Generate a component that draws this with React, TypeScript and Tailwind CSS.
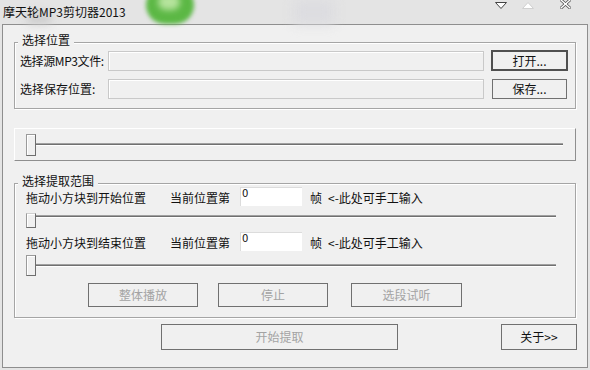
import type { ReactNode } from 'react'

const font = "font-['Noto_Sans_CJK_SC','Noto_Sans',sans-serif]"

function GroupBox({ title, className, children }: { title: string; className: string; children: ReactNode }) {
  return (
    <div className={`relative mx-[11px] border border-[#a5a5a5] shadow-[inset_1px_1px_0_#fff,1px_1px_0_#fff] ${className}`}>
      <span className="absolute left-[3px] top-[-10px] bg-[#f0f0f0] px-[4px] text-[12px] leading-[13px] text-[#111]">{title}</span>
      {children}
    </div>
  )
}

function Thumb({ className }: { className: string }) {
  return (
    <div className={`w-[10px] shrink-0 border border-[#9a9a9a] border-b-[#6e6e6e] border-r-[#6e6e6e] bg-[#f0f0f0] shadow-[inset_1px_1px_0_#fff] ${className}`} />
  )
}

function Groove({ className }: { className: string }) {
  return <div className={`h-[3px] border-t border-t-[#a0a0a0] border-b border-b-white bg-[#707070] ${className}`} />
}

function Button({ label, className, disabled, primary }: { label: string; className: string; disabled?: boolean; primary?: boolean }) {
  return (
    <button
      className={`flex shrink-0 items-center justify-center bg-[#f0f0f0] text-[12px] leading-none ${primary ? 'border-2 border-[#505050]' : 'border border-[#707070]'} ${disabled ? 'text-[#a3a3a3]' : 'text-[#111]'} ${className}`}
    >
      {label}
    </button>
  )
}

function FrameRow({ label }: { label: string }) {
  return (
    <div className="flex h-[19px] items-center pl-[11px] text-[12px] leading-[12px] text-[#111]">
      <span className="w-[144px] shrink-0 pt-[2px]">{label}</span>
      <span className="w-[70px] shrink-0 pt-[2px]">当前位置第</span>
      <div className="h-[19px] w-[62px] shrink-0 border-l border-t border-[#dcdcdc] bg-white pl-[1px] pt-[1px] font-['DejaVu_Sans',sans-serif] text-[10px] leading-[10px]">0</div>
      <span className="ml-[8px] pt-[2px]">帧</span>
      <span className="ml-[6px] pt-[2px]">&lt;-此处可手工输入</span>
    </div>
  )
}

export default function App() {
  return (
    <div className={`flex h-[370px] w-[590px] flex-col overflow-hidden bg-[#e4e4e4] ${font}`}>
      {/* title bar */}
      <div className="relative flex h-[24px] shrink-0 items-center">
        <div className="absolute left-[146px] top-[-14px] h-[38px] w-[48px] rounded-full bg-[#5cb845] blur-[2px]" />
        <div className="absolute left-[158px] top-[-6px] h-[16px] w-[22px] rounded-full bg-[#b5e39c] blur-[3px]" />
        <div className="absolute left-[26px] top-[12px] h-[12px] w-[26px] rounded-full bg-[#cdcdcd] blur-[4px]" />
        <div className="absolute left-[294px] top-0 h-[24px] w-[40px] bg-[#dcdce0] blur-[6px]" />
        <span className="relative ml-[3px] text-[12px] leading-none text-[#111]">摩天轮MP3剪切器2013</span>
        <div className="relative ml-auto mr-[19px] flex items-start self-start pt-[2px]">
          <svg width="12" height="7" viewBox="0 0 12 7" className="mr-[15px]">
            <path d="M0.5 0.5 H11.5 L6 6.5 Z" fill="#fff" stroke="#444" strokeWidth="1" />
          </svg>
          <svg width="12" height="7" viewBox="0 0 12 7" className="mr-[26px]">
            <path d="M6 0.5 L11.5 6.5 H0.5 Z" fill="#fff" stroke="#d0d0d0" strokeWidth="1" />
          </svg>
          <svg width="11" height="10" viewBox="0 0 11 10" className="mt-[-3px]">
            <path d="M1 1 L10 9 M10 1 L1 9" stroke="#555" strokeWidth="3" strokeLinecap="round" />
            <path d="M1 1 L10 9 M10 1 L1 9" stroke="#fff" strokeWidth="1.4" strokeLinecap="round" />
          </svg>
        </div>
      </div>

      {/* window body */}
      <div className="ml-[2px] mr-[2px] flex h-[344px] shrink-0 flex-col border border-[#8e8e8e] bg-[#f0f0f0]">
        <GroupBox title="选择位置" className="mt-[17px] h-[67px]">
          <div className="flex flex-col gap-[7px] pl-[5px] pt-[7px]">
            <div className="flex h-[21px] items-center">
              <span className="w-[88px] shrink-0 text-[12px] leading-none tracking-[-0.4px] text-[#111]">选择源MP3文件:</span>
              <div className="h-[20px] w-[376px] border border-[#c9c9c9] shadow-[inset_1px_1px_0_#fff]" />
              <Button label="打开..." primary className="ml-[7px] h-[21px] w-[77px]" />
            </div>
            <div className="flex h-[21px] items-center">
              <span className="w-[88px] shrink-0 text-[12px] leading-none text-[#111]">选择保存位置:</span>
              <div className="h-[20px] w-[376px] border border-[#c9c9c9] shadow-[inset_1px_1px_0_#fff]" />
              <Button label="保存..." className="ml-[8px] h-[20px] w-[75px]" />
            </div>
          </div>
        </GroupBox>

        <div className="mx-[11px] mt-[19px] flex h-[33px] items-center border border-[#fff] border-b-[#8e8e8e] border-r-[#8e8e8e] pl-[11px] pr-[12px]">
          <Thumb className="h-[22px]" />
          <Groove className="flex-1" />
        </div>

        <GroupBox title="选择提取范围" className="mt-[22px] h-[135px]">
          <div className="flex flex-col pt-[3px]">
            <FrameRow label="拖动小方块到开始位置" />
            <div className="flex h-[22px] items-start pl-[11px] pr-[19px]">
              <Thumb className="mt-[7px] h-[15px] border-t-[#cfcfcf]" />
              <Groove className="mt-[9px] flex-1" />
            </div>
            <div className="mt-[4px]">
              <FrameRow label="拖动小方块到结束位置" />
            </div>
            <div className="mt-[4px] flex h-[21px] items-center pl-[11px] pr-[19px]">
              <Thumb className="h-[21px]" />
              <Groove className="flex-1" />
            </div>
            <div className="mt-[7px] flex h-[24px] pl-[73px]">
              <Button label="整体播放" disabled className="h-[24px] w-[110px]" />
              <Button label="停止" disabled className="ml-[20px] h-[24px] w-[110px]" />
              <Button label="选段试听" disabled className="ml-[23px] h-[24px] w-[111px]" />
            </div>
          </div>
        </GroupBox>

        <div className="mt-[6px] flex h-[26px] pl-[158px]">
          <Button label="开始提取" disabled className="h-[26px] w-[237px]" />
          <Button label="关于>>" className="ml-[103px] h-[26px] w-[76px]" />
        </div>
      </div>
    </div>
  )
}
